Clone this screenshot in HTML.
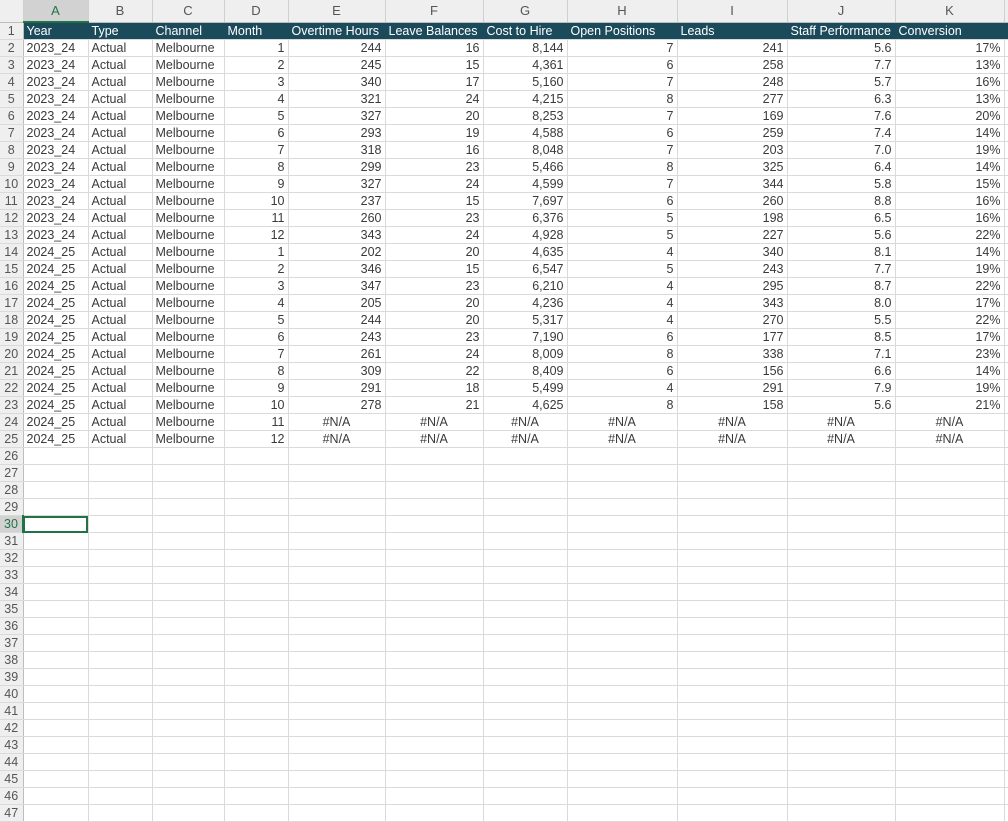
<!DOCTYPE html><html><head><meta charset="utf-8"><style>
body{margin:0;background:#fff;width:1008px;height:818px;overflow:hidden;font-family:"Liberation Sans",Arial,sans-serif;}
table{border-collapse:collapse;table-layout:fixed;position:absolute;left:0;top:0;width:1064px;}
td{height:16px;padding:0 3px;border-right:1px solid #dadada;border-bottom:1px solid #dadada;font-size:12.5px;color:#3a3a3a;white-space:nowrap;overflow:hidden;line-height:16px;}
tr.h td{height:21px;background:#efefef;color:#555;text-align:center;font-size:13px;border-right:1px solid #d0d0d0;border-bottom:1px solid #bdbdbd;}
tr.h td.sel{background:#d2d2d2;color:#217346;border-bottom:2px solid #217346;}
td.rh{background:#efefef;color:#555;text-align:center;padding:0;border-right:1px solid #bdbdbd;font-size:12.5px;}
td.rh.sel{background:#d2d2d2;color:#217346;border-right:2px solid #217346;}
tr.t td{background:#1b4a5b;color:#fff;border-right:1px solid #1b4a5b;}
tr.t td.rh{background:#efefef;color:#555;border-right:1px solid #bdbdbd;}
td.r{text-align:right}td.c{text-align:center}
td.selc{outline:2px solid #217346;outline-offset:-2px;}
</style></head><body>
<table>
<colgroup><col style="width:23px"><col style="width:65px"><col style="width:64px"><col style="width:72px"><col style="width:64px"><col style="width:97px"><col style="width:98px"><col style="width:84px"><col style="width:110px"><col style="width:110px"><col style="width:108px"><col style="width:109px"><col style="width:60px"></colgroup>
<tr class="h"><td></td><td class="sel">A</td><td>B</td><td>C</td><td>D</td><td>E</td><td>F</td><td>G</td><td>H</td><td>I</td><td>J</td><td>K</td><td></td></tr>
<tr class="t"><td class="rh">1</td><td>Year</td><td>Type</td><td>Channel</td><td>Month</td><td>Overtime Hours</td><td>Leave Balances</td><td>Cost to Hire</td><td>Open Positions</td><td>Leads</td><td>Staff Performance</td><td>Conversion</td><td></td></tr>
<tr><td class="rh">2</td><td>2023_24</td><td>Actual</td><td>Melbourne</td><td class="r">1</td><td class="r">244</td><td class="r">16</td><td class="r">8,144</td><td class="r">7</td><td class="r">241</td><td class="r">5.6</td><td class="r">17%</td><td></td></tr>
<tr><td class="rh">3</td><td>2023_24</td><td>Actual</td><td>Melbourne</td><td class="r">2</td><td class="r">245</td><td class="r">15</td><td class="r">4,361</td><td class="r">6</td><td class="r">258</td><td class="r">7.7</td><td class="r">13%</td><td></td></tr>
<tr><td class="rh">4</td><td>2023_24</td><td>Actual</td><td>Melbourne</td><td class="r">3</td><td class="r">340</td><td class="r">17</td><td class="r">5,160</td><td class="r">7</td><td class="r">248</td><td class="r">5.7</td><td class="r">16%</td><td></td></tr>
<tr><td class="rh">5</td><td>2023_24</td><td>Actual</td><td>Melbourne</td><td class="r">4</td><td class="r">321</td><td class="r">24</td><td class="r">4,215</td><td class="r">8</td><td class="r">277</td><td class="r">6.3</td><td class="r">13%</td><td></td></tr>
<tr><td class="rh">6</td><td>2023_24</td><td>Actual</td><td>Melbourne</td><td class="r">5</td><td class="r">327</td><td class="r">20</td><td class="r">8,253</td><td class="r">7</td><td class="r">169</td><td class="r">7.6</td><td class="r">20%</td><td></td></tr>
<tr><td class="rh">7</td><td>2023_24</td><td>Actual</td><td>Melbourne</td><td class="r">6</td><td class="r">293</td><td class="r">19</td><td class="r">4,588</td><td class="r">6</td><td class="r">259</td><td class="r">7.4</td><td class="r">14%</td><td></td></tr>
<tr><td class="rh">8</td><td>2023_24</td><td>Actual</td><td>Melbourne</td><td class="r">7</td><td class="r">318</td><td class="r">16</td><td class="r">8,048</td><td class="r">7</td><td class="r">203</td><td class="r">7.0</td><td class="r">19%</td><td></td></tr>
<tr><td class="rh">9</td><td>2023_24</td><td>Actual</td><td>Melbourne</td><td class="r">8</td><td class="r">299</td><td class="r">23</td><td class="r">5,466</td><td class="r">8</td><td class="r">325</td><td class="r">6.4</td><td class="r">14%</td><td></td></tr>
<tr><td class="rh">10</td><td>2023_24</td><td>Actual</td><td>Melbourne</td><td class="r">9</td><td class="r">327</td><td class="r">24</td><td class="r">4,599</td><td class="r">7</td><td class="r">344</td><td class="r">5.8</td><td class="r">15%</td><td></td></tr>
<tr><td class="rh">11</td><td>2023_24</td><td>Actual</td><td>Melbourne</td><td class="r">10</td><td class="r">237</td><td class="r">15</td><td class="r">7,697</td><td class="r">6</td><td class="r">260</td><td class="r">8.8</td><td class="r">16%</td><td></td></tr>
<tr><td class="rh">12</td><td>2023_24</td><td>Actual</td><td>Melbourne</td><td class="r">11</td><td class="r">260</td><td class="r">23</td><td class="r">6,376</td><td class="r">5</td><td class="r">198</td><td class="r">6.5</td><td class="r">16%</td><td></td></tr>
<tr><td class="rh">13</td><td>2023_24</td><td>Actual</td><td>Melbourne</td><td class="r">12</td><td class="r">343</td><td class="r">24</td><td class="r">4,928</td><td class="r">5</td><td class="r">227</td><td class="r">5.6</td><td class="r">22%</td><td></td></tr>
<tr><td class="rh">14</td><td>2024_25</td><td>Actual</td><td>Melbourne</td><td class="r">1</td><td class="r">202</td><td class="r">20</td><td class="r">4,635</td><td class="r">4</td><td class="r">340</td><td class="r">8.1</td><td class="r">14%</td><td></td></tr>
<tr><td class="rh">15</td><td>2024_25</td><td>Actual</td><td>Melbourne</td><td class="r">2</td><td class="r">346</td><td class="r">15</td><td class="r">6,547</td><td class="r">5</td><td class="r">243</td><td class="r">7.7</td><td class="r">19%</td><td></td></tr>
<tr><td class="rh">16</td><td>2024_25</td><td>Actual</td><td>Melbourne</td><td class="r">3</td><td class="r">347</td><td class="r">23</td><td class="r">6,210</td><td class="r">4</td><td class="r">295</td><td class="r">8.7</td><td class="r">22%</td><td></td></tr>
<tr><td class="rh">17</td><td>2024_25</td><td>Actual</td><td>Melbourne</td><td class="r">4</td><td class="r">205</td><td class="r">20</td><td class="r">4,236</td><td class="r">4</td><td class="r">343</td><td class="r">8.0</td><td class="r">17%</td><td></td></tr>
<tr><td class="rh">18</td><td>2024_25</td><td>Actual</td><td>Melbourne</td><td class="r">5</td><td class="r">244</td><td class="r">20</td><td class="r">5,317</td><td class="r">4</td><td class="r">270</td><td class="r">5.5</td><td class="r">22%</td><td></td></tr>
<tr><td class="rh">19</td><td>2024_25</td><td>Actual</td><td>Melbourne</td><td class="r">6</td><td class="r">243</td><td class="r">23</td><td class="r">7,190</td><td class="r">6</td><td class="r">177</td><td class="r">8.5</td><td class="r">17%</td><td></td></tr>
<tr><td class="rh">20</td><td>2024_25</td><td>Actual</td><td>Melbourne</td><td class="r">7</td><td class="r">261</td><td class="r">24</td><td class="r">8,009</td><td class="r">8</td><td class="r">338</td><td class="r">7.1</td><td class="r">23%</td><td></td></tr>
<tr><td class="rh">21</td><td>2024_25</td><td>Actual</td><td>Melbourne</td><td class="r">8</td><td class="r">309</td><td class="r">22</td><td class="r">8,409</td><td class="r">6</td><td class="r">156</td><td class="r">6.6</td><td class="r">14%</td><td></td></tr>
<tr><td class="rh">22</td><td>2024_25</td><td>Actual</td><td>Melbourne</td><td class="r">9</td><td class="r">291</td><td class="r">18</td><td class="r">5,499</td><td class="r">4</td><td class="r">291</td><td class="r">7.9</td><td class="r">19%</td><td></td></tr>
<tr><td class="rh">23</td><td>2024_25</td><td>Actual</td><td>Melbourne</td><td class="r">10</td><td class="r">278</td><td class="r">21</td><td class="r">4,625</td><td class="r">8</td><td class="r">158</td><td class="r">5.6</td><td class="r">21%</td><td></td></tr>
<tr><td class="rh">24</td><td>2024_25</td><td>Actual</td><td>Melbourne</td><td class="r">11</td><td class="c">#N/A</td><td class="c">#N/A</td><td class="c">#N/A</td><td class="c">#N/A</td><td class="c">#N/A</td><td class="c">#N/A</td><td class="c">#N/A</td><td></td></tr>
<tr><td class="rh">25</td><td>2024_25</td><td>Actual</td><td>Melbourne</td><td class="r">12</td><td class="c">#N/A</td><td class="c">#N/A</td><td class="c">#N/A</td><td class="c">#N/A</td><td class="c">#N/A</td><td class="c">#N/A</td><td class="c">#N/A</td><td></td></tr>
<tr><td class="rh">26</td><td></td><td></td><td></td><td></td><td></td><td></td><td></td><td></td><td></td><td></td><td></td><td></td></tr>
<tr><td class="rh">27</td><td></td><td></td><td></td><td></td><td></td><td></td><td></td><td></td><td></td><td></td><td></td><td></td></tr>
<tr><td class="rh">28</td><td></td><td></td><td></td><td></td><td></td><td></td><td></td><td></td><td></td><td></td><td></td><td></td></tr>
<tr><td class="rh">29</td><td></td><td></td><td></td><td></td><td></td><td></td><td></td><td></td><td></td><td></td><td></td><td></td></tr>
<tr><td class="rh sel">30</td><td class="selc"></td><td></td><td></td><td></td><td></td><td></td><td></td><td></td><td></td><td></td><td></td><td></td></tr>
<tr><td class="rh">31</td><td></td><td></td><td></td><td></td><td></td><td></td><td></td><td></td><td></td><td></td><td></td><td></td></tr>
<tr><td class="rh">32</td><td></td><td></td><td></td><td></td><td></td><td></td><td></td><td></td><td></td><td></td><td></td><td></td></tr>
<tr><td class="rh">33</td><td></td><td></td><td></td><td></td><td></td><td></td><td></td><td></td><td></td><td></td><td></td><td></td></tr>
<tr><td class="rh">34</td><td></td><td></td><td></td><td></td><td></td><td></td><td></td><td></td><td></td><td></td><td></td><td></td></tr>
<tr><td class="rh">35</td><td></td><td></td><td></td><td></td><td></td><td></td><td></td><td></td><td></td><td></td><td></td><td></td></tr>
<tr><td class="rh">36</td><td></td><td></td><td></td><td></td><td></td><td></td><td></td><td></td><td></td><td></td><td></td><td></td></tr>
<tr><td class="rh">37</td><td></td><td></td><td></td><td></td><td></td><td></td><td></td><td></td><td></td><td></td><td></td><td></td></tr>
<tr><td class="rh">38</td><td></td><td></td><td></td><td></td><td></td><td></td><td></td><td></td><td></td><td></td><td></td><td></td></tr>
<tr><td class="rh">39</td><td></td><td></td><td></td><td></td><td></td><td></td><td></td><td></td><td></td><td></td><td></td><td></td></tr>
<tr><td class="rh">40</td><td></td><td></td><td></td><td></td><td></td><td></td><td></td><td></td><td></td><td></td><td></td><td></td></tr>
<tr><td class="rh">41</td><td></td><td></td><td></td><td></td><td></td><td></td><td></td><td></td><td></td><td></td><td></td><td></td></tr>
<tr><td class="rh">42</td><td></td><td></td><td></td><td></td><td></td><td></td><td></td><td></td><td></td><td></td><td></td><td></td></tr>
<tr><td class="rh">43</td><td></td><td></td><td></td><td></td><td></td><td></td><td></td><td></td><td></td><td></td><td></td><td></td></tr>
<tr><td class="rh">44</td><td></td><td></td><td></td><td></td><td></td><td></td><td></td><td></td><td></td><td></td><td></td><td></td></tr>
<tr><td class="rh">45</td><td></td><td></td><td></td><td></td><td></td><td></td><td></td><td></td><td></td><td></td><td></td><td></td></tr>
<tr><td class="rh">46</td><td></td><td></td><td></td><td></td><td></td><td></td><td></td><td></td><td></td><td></td><td></td><td></td></tr>
<tr><td class="rh">47</td><td></td><td></td><td></td><td></td><td></td><td></td><td></td><td></td><td></td><td></td><td></td><td></td></tr>
</table>
</body></html>
